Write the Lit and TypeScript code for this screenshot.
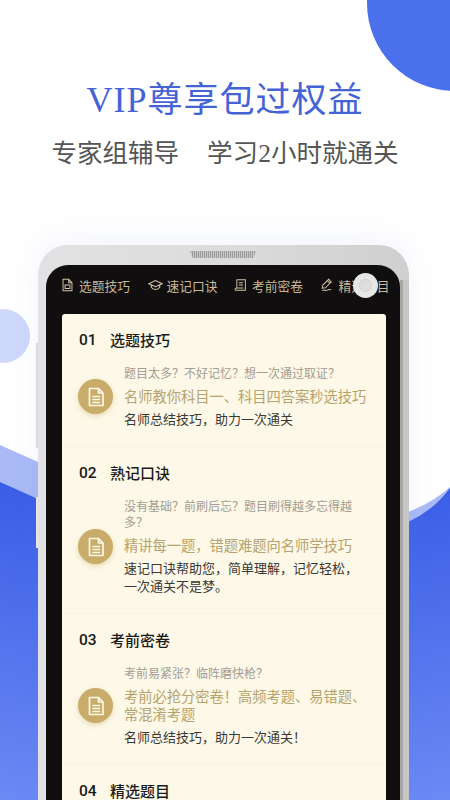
import { LitElement, html, css, svg } from "lit";
import { customElement } from "lit/decorators.js";

const tabIcons = [
  svg`<path d="M2.5 1.5h7l4 4v9h-11z M9.5 1.5v4h4" /><rect x="5" y="8" width="6" height="4" />`,
  svg`<path d="M.8 6.5L8 3l7.2 3.5L8 10z M3.5 8v2.5c2 3.4 7 3.4 9 0V8" />`,
  svg`<path d="M3 2h11v12H1.5 M3.5 2v9.5h8 M1.5 14c-.6-1.4 0-2.5 2-2.5 M6 5.5h5 M6 8h5" />`,
  svg`<path d="M1.5 11.5l.8-3.4L9.5 1.5l3 3-7 6.7z M8 3l3 3 M1.5 14.5c3-2 4 .6 6-.6s3-1.2 5-.4" />`,
];
const tabs = ["选题技巧", "速记口诀", "考前密卷", "精选题目"];
const Q = "\uFF1F";
const C = "\uFF0C";
const E = "\uFF01";
const sections = [
  { n: "01", t: "选题技巧", q: `题目太多${Q}不好记忆${Q}想一次通过取证${Q}`, g: "名师教你科目一、科目四答案秒选技巧", d: `名师总结技巧${C}助力一次通关` },
  { n: "02", t: "熟记口诀", q: `没有基础${Q}前刷后忘${Q}题目刷得越多忘得越多${Q}`, g: `精讲每一题${C}错题难题向名师学技巧`, d: `速记口诀帮助您${C}简单理解${C}记忆轻松${C}一次通关不是梦。` },
  { n: "03", t: "考前密卷", q: `考前易紧张${Q}临阵磨快枪${Q}`, g: `考前必抢分密卷${E}高频考题、易错题、常混淆考题`, d: `名师总结技巧${C}助力一次通关${E}` },
  { n: "04", t: "精选题目", q: "", g: "", d: "" },
];

@customElement("app-root")
export class AppRoot extends LitElement {
  static styles = css`
    :host {
      display: block;
      position: relative;
      width: 450px;
      height: 800px;
      overflow: hidden;
      background: #fff;
      font-family: "Noto Sans CJK SC", "Liberation Sans", sans-serif;
    }
    .bg { position: absolute; inset: 0; width: 450px; height: 800px; }
    .page { position: relative; display: flex; flex-direction: column; height: 800px; }
    .hero { height: 245px; flex: none; display: flex; flex-direction: column; align-items: center; }
    .title {
      margin: 73px 0 0;
      height: 48px;
      line-height: 48px;
      font-size: 35px;
      letter-spacing: 1px;
      color: #4463d4;
      font-weight: 400;
      white-space: nowrap;
    }
    .title .latin { font-family: "Liberation Serif", serif; font-size: 36px; letter-spacing: 1px; }
    .sub {
      margin-top: 15px;
      height: 30px;
      line-height: 30px;
      font-size: 25.5px;
      color: #555;
      white-space: nowrap;
      display: flex;
      gap: 28px;
    }
    .sub .digit { font-family: "Liberation Serif", serif; }
    .phone {
      position: relative;
      margin-left: 38px;
      width: 371px;
      flex: 1;
      box-sizing: border-box;
      padding: 20px 9px 0 8px;
      border-radius: 30px 30px 0 0;
      background:
        linear-gradient(90deg, #a8a6a4 0 3px, #c6c6c6 3px) right 35px / 9px 100% no-repeat,
        linear-gradient(90deg, #e2e2e4 0, #dcdcdc 50%, #cfcfcf 100%);
      box-shadow: 0 -6px 30px rgba(90, 110, 230, 0.08);
    }
    .speaker {
      position: absolute;
      top: 6px;
      left: 152px;
      width: 66px;
      height: 7px;
      clip-path: polygon(0 0, 100% 0, 96% 100%, 4% 100%);
      background: repeating-linear-gradient(90deg, #9a9a9a 0 1px, #c9c9c9 1px 2px);
    }
    .key {
      position: absolute;
      left: -2px;
      top: 98px;
      width: 2px;
      height: 105px;
      background: #dcdcdc;
    }
    .key.second { top: 252px; height: 51px; background: #e6e6e6; }
    .screen {
      height: 100%;
      background: #100e0e;
      border-radius: 22px 22px 0 0;
      display: flex;
      flex-direction: column;
      overflow: hidden;
    }
    .tabs {
      flex: none;
      height: 49px;
      box-sizing: border-box;
      padding: 0 0 9px 15px;
      display: flex;
      align-items: center;
      gap: 15.5px;
      white-space: nowrap;
      overflow: hidden;
      color: #c9b996;
      font-size: 12.75px;
    }
    .tab { display: flex; align-items: center; gap: 5px; flex: none; width: 71px; }
    .tab svg {
      width: 13px;
      height: 14px;
      flex: none;
      fill: none;
      stroke: #d2c4a4;
      stroke-width: 1.2;
    }
    .tab:nth-child(2) svg { width: 15px; margin-right: -1px; }
    .card {
      flex: 1;
      margin: 0 14px 0 16px;
      background: #fdf8e7;
      border-radius: 3px 3px 0 0;
      overflow: hidden;
    }
    .section { padding: 16px 0 18px; border-bottom: 1px solid #f8f2df; }
    .head {
      display: flex;
      height: 20px;
      line-height: 20px;
      padding-left: 17px;
      font-size: 15px;
      font-weight: 500;
      color: #1a1a1a;
    }
    .num { width: 31px; font-family: "Roboto", sans-serif; font-size: 15.5px; }
    .row {
      display: flex;
      align-items: center;
      gap: 11px;
      margin-top: 15px;
      padding-left: 16px;
    }
    .badge {
      width: 35px;
      height: 35px;
      flex: none;
      border-radius: 50%;
      background: #c9ac69;
      box-shadow: 0 2px 5px rgba(190, 160, 90, 0.35);
      display: flex;
      align-items: center;
      justify-content: center;
    }
    .badge svg {
      width: 18px;
      height: 20px;
      fill: none;
      stroke: #fdf8e7;
      stroke-width: 1.7;
      stroke-linejoin: round;
      stroke-linecap: round;
    }
    .text { width: 246px; }
    .q { font-size: 12px; line-height: 16px; color: #a39d92; width: 236px; }
    .g { font-size: 14.25px; line-height: 18px; color: #b6a36d; margin-top: 6px; }
    .d { font-size: 13px; line-height: 18px; color: #3a3834; margin-top: 5px; }
    .float {
      position: absolute;
      left: 315px;
      top: 28px;
      width: 25px;
      height: 25px;
      border-radius: 50%;
      background: #e6e6e6;
      display: flex;
      align-items: center;
      justify-content: center;
    }
    .float span {
      width: 13px;
      height: 13px;
      border-radius: 50%;
      background: #dedede;
      border: 1px solid #cfcfcf;
      box-sizing: border-box;
    }
  `;

  render() {
    return html`
      <svg class="bg" viewBox="0 0 450 800">
        <defs>
          <linearGradient id="blue" x1="0" y1="0" x2="0" y2="1">
            <stop offset="0" stop-color="#3a5de6" />
            <stop offset="1" stop-color="#6b8af4" />
          </linearGradient>
        </defs>
        <circle cx="455" cy="3" r="88" fill="#4b70ec" />
        <circle cx="3" cy="336" r="27" fill="#ced8fb" />
        <path d="M0 445 L38 462 H408 L408 512 Q432 503 450 487 V800 H0 Z" fill="#a9baf6" />
        <path d="M0 482 L38 499 H400 V523 L408 522 Q434 510 450 488 V800 H0 Z" fill="url(#blue)" />
      </svg>
      <div class="page">
        <div class="hero">
          <h1 class="title"><span class="latin">VIP</span>尊享包过权益</h1>
          <div class="sub"><span>专家组辅导</span><span>学习<span class="digit">2</span>小时就通关</span></div>
        </div>
        <div class="phone">
          <div class="speaker"></div>
          <div class="key"></div>
          <div class="key second"></div>
          <div class="screen">
            <div class="tabs">
              ${tabs.map(
                (t, i) => html`<div class="tab"><svg viewBox="0 0 16 16" preserveAspectRatio="none">${tabIcons[i]}</svg><span>${t}</span></div>`
              )}
            </div>
            <div class="card">
              ${sections.map(
                (s) => html`
                  <div class="section">
                    <div class="head"><span class="num">${s.n}</span><span>${s.t}</span></div>
                    ${s.q
                      ? html`<div class="row">
                          <div class="badge">
                            <svg viewBox="0 0 18 20">
                              <path d="M2.5 1.5h9l4.5 4.5v12.5H2.5z M11.5 1.5V6H16 M6 9.5h6.5 M6 12.5h6.5 M6 15.5h6.5" />
                            </svg>
                          </div>
                          <div class="text">
                            <div class="q">${s.q}</div>
                            <div class="g">${s.g}</div>
                            <div class="d">${s.d}</div>
                          </div>
                        </div>`
                      : ""}
                  </div>
                `
              )}
            </div>
          </div>
          <div class="float"><span></span></div>
        </div>
      </div>
    `;
  }
}
